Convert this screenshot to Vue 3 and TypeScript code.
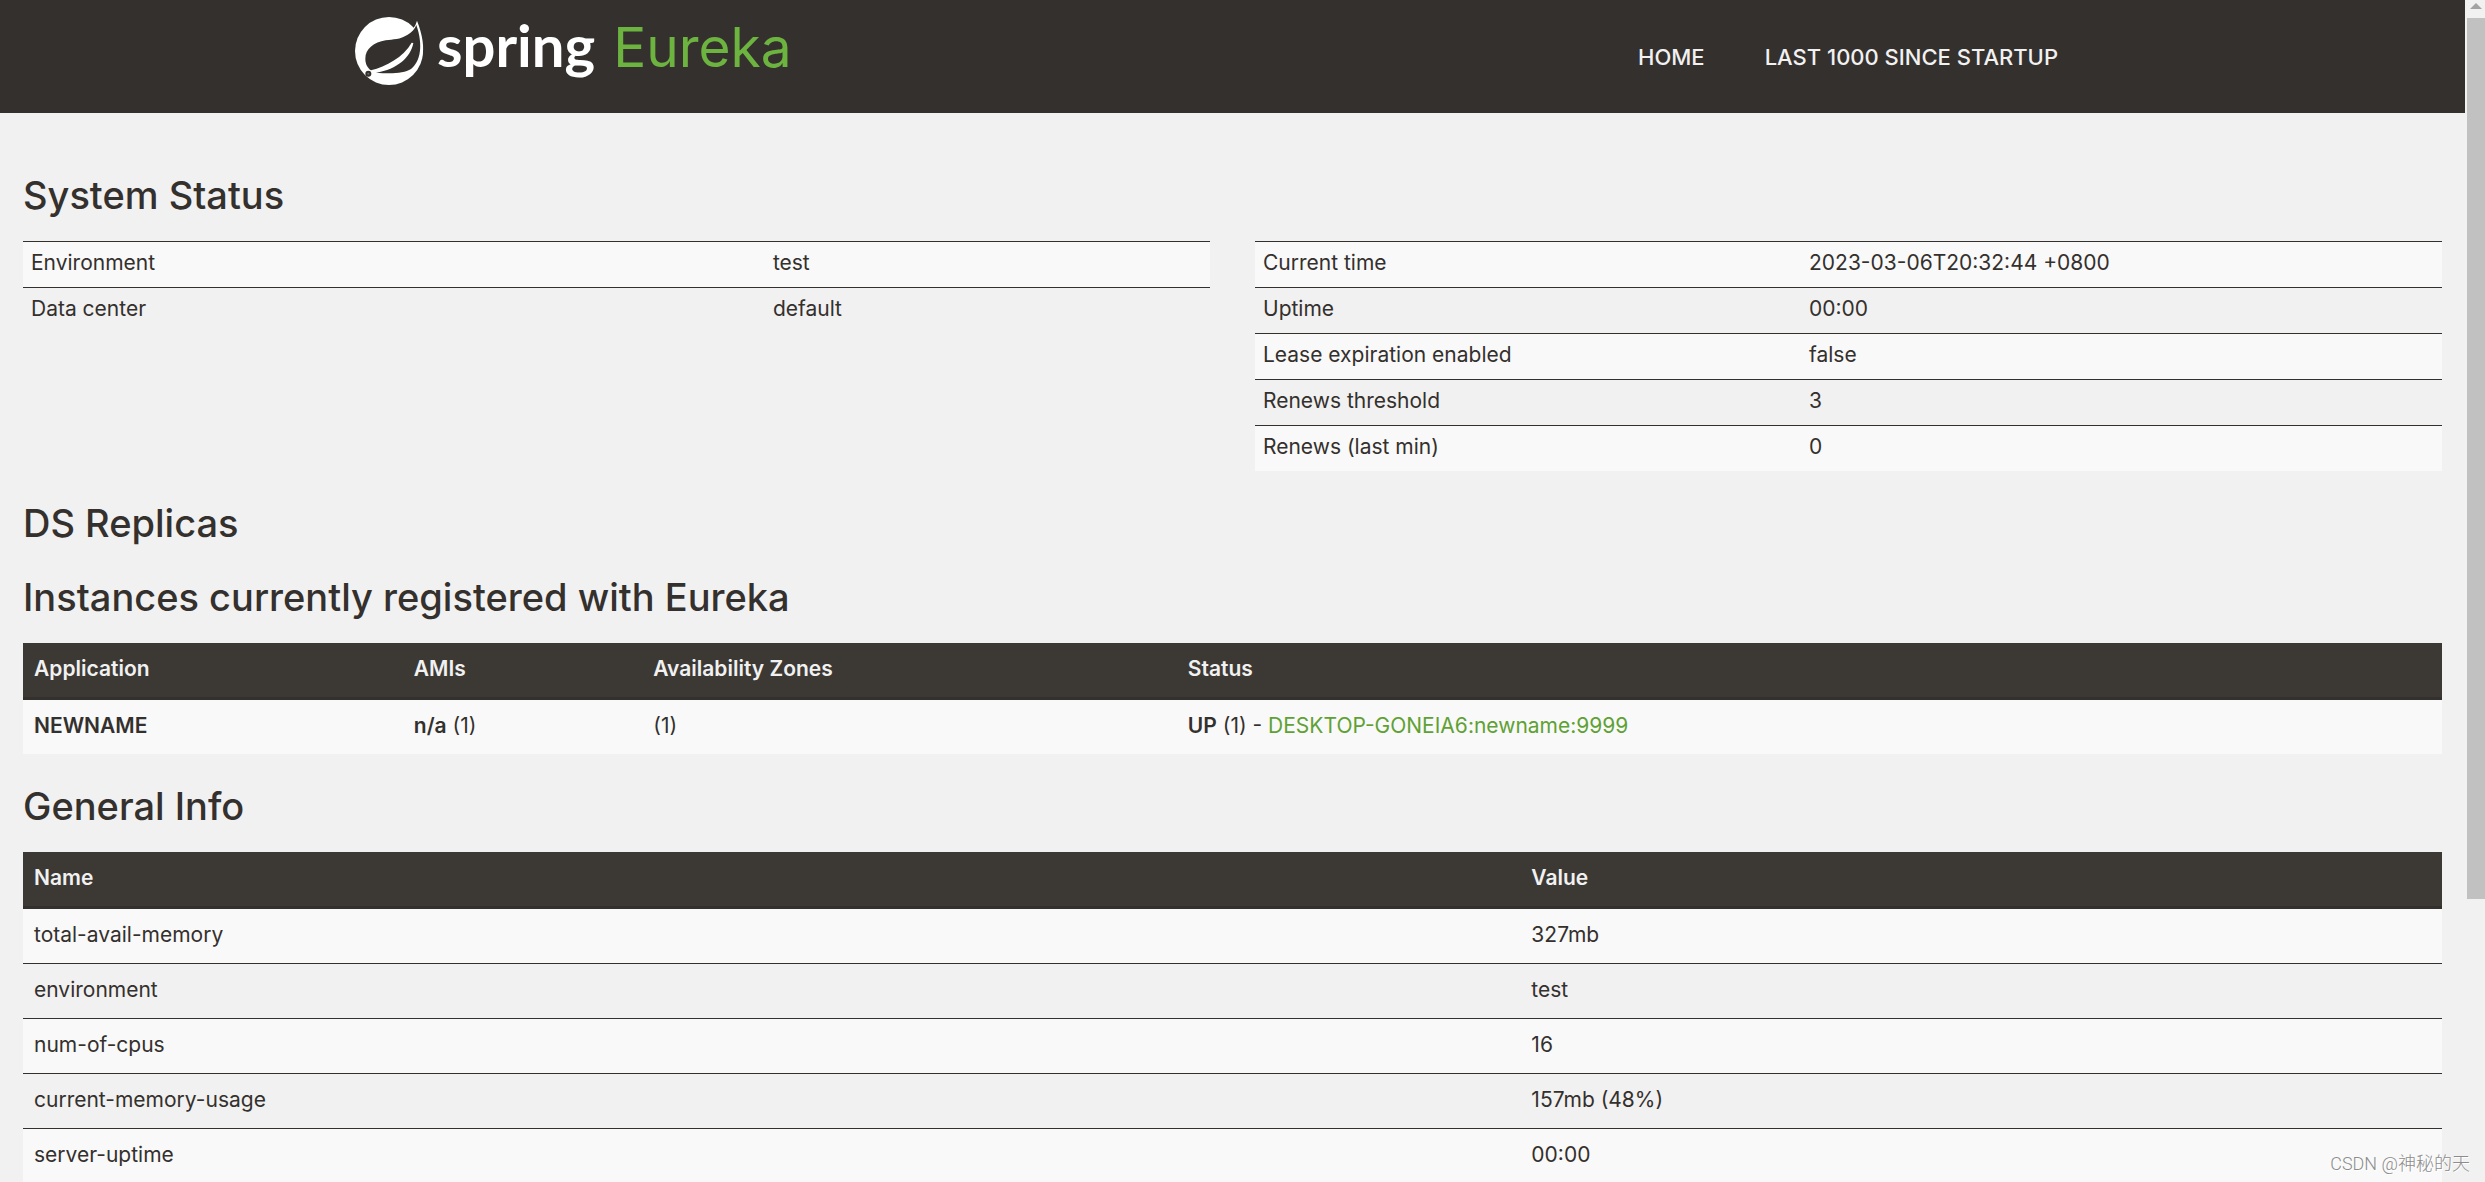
<script setup lang="ts">
interface Pair {
  name: string
  value: string
}

interface Instance {
  application: string
  ami: string
  amiCount: number
  zoneCount: number
  status: string
  statusCount: number
  id: string
}

const environment: Pair[] = [
  { name: 'Environment', value: 'test' },
  { name: 'Data center', value: 'default' },
]

const runtime: Pair[] = [
  { name: 'Current time', value: '2023-03-06T20:32:44 +0800' },
  { name: 'Uptime', value: '00:00' },
  { name: 'Lease expiration enabled', value: 'false' },
  { name: 'Renews threshold', value: '3' },
  { name: 'Renews (last min)', value: '0' },
]

const instances: Instance[] = [
  {
    application: 'NEWNAME',
    ami: 'n/a',
    amiCount: 1,
    zoneCount: 1,
    status: 'UP',
    statusCount: 1,
    id: 'DESKTOP-GONEIA6:newname:9999',
  },
]

const generalInfo: Pair[] = [
  { name: 'total-avail-memory', value: '327mb' },
  { name: 'environment', value: 'test' },
  { name: 'num-of-cpus', value: '16' },
  { name: 'current-memory-usage', value: '157mb (48%)' },
  { name: 'server-uptime', value: '00:00' },
]
</script>

<template>
  <div class="window">
    <div class="page">
      <header class="topbar">
        <div class="container">
          <a class="brand" href="#">
            <svg class="leaf" viewBox="42 48 213 210" aria-hidden="true">
              <circle cx="147" cy="153" r="102" fill="#fff" />
              <path d="M231 62 C248 105 254 145 246 172 L226 180 L205 100 C216 92 226 80 231 62Z" fill="#fff" />
              <path
                d="M229 75 C225 87 215 97 203 104 C180 119 160 117 137 121 C102 127 76 146 76 176 C76 192 83 204 93 211 C138 199 190 172 215 128 L220 129 C212 172 172 208 108 218 C150 222 192 221 213 207 C242 184 250 135 229 75Z"
                fill="#34302d"
              />
              <circle cx="85" cy="221" r="9" fill="#34302d" />
              <circle cx="85" cy="221" r="3" fill="#6b6866" />
            </svg>
            <span class="brand-name">spring</span>
            <span class="brand-product">Eureka</span>
          </a>
          <nav class="menu">
            <a href="#">HOME</a>
            <a href="#lastn">LAST 1000 SINCE STARTUP</a>
          </nav>
        </div>
      </header>

      <main class="content">
        <section>
          <h1>System Status</h1>
          <div class="columns">
            <table class="compact environment">
              <tbody>
                <tr v-for="row in environment" :key="row.name">
                  <td>{{ row.name }}</td>
                  <td>{{ row.value }}</td>
                </tr>
              </tbody>
            </table>
            <table class="compact runtime">
              <tbody>
                <tr v-for="row in runtime" :key="row.name">
                  <td>{{ row.name }}</td>
                  <td>{{ row.value }}</td>
                </tr>
              </tbody>
            </table>
          </div>
        </section>

        <section class="replicas">
          <h1>DS Replicas</h1>
        </section>

        <section>
          <h1>Instances currently registered with Eureka</h1>
          <table class="listing instances">
            <thead>
              <tr>
                <th>Application</th>
                <th>AMIs</th>
                <th>Availability Zones</th>
                <th>Status</th>
              </tr>
            </thead>
            <tbody>
              <tr v-for="item in instances" :key="item.id">
                <td><b>{{ item.application }}</b></td>
                <td><b>{{ item.ami }}</b> ({{ item.amiCount }})</td>
                <td>({{ item.zoneCount }})</td>
                <td>
                  <b>{{ item.status }}</b> ({{ item.statusCount }}) -
                  <a href="#info">{{ item.id }}</a>
                </td>
              </tr>
            </tbody>
          </table>
        </section>

        <section>
          <h1>General Info</h1>
          <table class="listing general">
            <thead>
              <tr>
                <th>Name</th>
                <th>Value</th>
              </tr>
            </thead>
            <tbody>
              <tr v-for="row in generalInfo" :key="row.name">
                <td>{{ row.name }}</td>
                <td>{{ row.value }}</td>
              </tr>
            </tbody>
          </table>
        </section>
      </main>
    </div>

    <div class="scrollbar" aria-hidden="true">
      <svg class="arrow" viewBox="0 0 12 6"><path d="M6 0 L12 6 H0Z" fill="#a3a3a3" /></svg>
      <div class="thumb"></div>
    </div>

    <p class="watermark">CSDN @神秘的天</p>
  </div>
</template>

<style>
body {
  margin: 0;
  background: #f1f1f1;
}
</style>

<style scoped>
.window {
  position: relative;
  display: flex;
  height: 100vh;
  overflow: hidden;
  background: #f1f1f1;
  color: #34302d;
  font-family: Inter, "Noto Sans", sans-serif;
  font-size: 21px;
  line-height: 30px;
}

.page {
  flex: 1;
  min-width: 0;
}

.topbar {
  background: #34302d;
}

.container {
  display: flex;
  justify-content: space-between;
  align-items: center;
  box-sizing: border-box;
  max-width: 1757px;
  height: 113px;
  margin: 0 auto;
  padding-right: 23px;
}

.brand {
  display: flex;
  align-items: baseline;
  align-self: flex-start;
  padding-top: 16px;
  line-height: 58px;
  text-decoration: none;
}

.leaf {
  align-self: flex-start;
  width: 71px;
  height: 70px;
  margin-right: 12px;
}

.brand-name {
  margin-right: 18px;
  color: #fff;
  font-family: Lato, sans-serif;
  font-size: 58px;
  font-weight: 700;
}

.brand-product {
  color: #6db33f;
  font-size: 55px;
}

.menu {
  display: flex;
}

.menu a {
  padding: 0 30px;
  color: #f1f1f1;
  font-size: 22px;
  font-weight: 500;
  text-decoration: none;
}

.content {
  padding: 62px 23px 0;
}

section {
  margin-bottom: 32px;
}

.replicas {
  margin-bottom: 34px;
}

h1 {
  margin: 0;
  font-size: 38px;
  font-weight: 500;
  line-height: 40px;
}

h1 + * {
  margin-top: 26px;
}

.columns {
  display: grid;
  grid-template-columns: 1fr 1fr;
  align-items: start;
  gap: 45px;
}

table {
  width: 100%;
  border-spacing: 0;
  table-layout: fixed;
}

th,
td {
  box-sizing: border-box;
  text-align: left;
}

tbody tr:nth-child(odd) {
  background: #f9f9f9;
}

.compact td {
  padding: 6px 8px 9px;
  border-top: 1px solid #34302d;
}

.listing th,
.listing td {
  padding: 11px 11px 13px;
}

.listing th {
  border-bottom: 3px solid #34302d;
  background: #3c3834;
  color: #f1f1f1;
  font-weight: 600;
}

.listing tr + tr td {
  border-top: 1px solid #34302d;
}

.environment td:first-child {
  width: 62.5%;
}

.runtime td:first-child {
  width: 46%;
}

.instances th:nth-child(1) {
  width: 15.7%;
}

.instances th:nth-child(2) {
  width: 9.9%;
}

.instances th:nth-child(3) {
  width: 22.1%;
}

.general th:first-child {
  width: 61.9%;
}

b {
  font-weight: 600;
}

td a {
  color: #5fa134;
  text-decoration: none;
}

.scrollbar {
  display: flex;
  flex-direction: column;
  box-sizing: border-box;
  width: 20px;
  padding: 3px 0 0 2px;
}

.arrow {
  flex: none;
  align-self: center;
  width: 12px;
  height: 6px;
  margin-bottom: 9px;
}

.thumb {
  height: calc(75% - 3px);
  background: #c1c1c1;
}

.watermark {
  position: absolute;
  right: 15px;
  bottom: 3px;
  margin: 0;
  color: #8c8c8c;
  font-family: Roboto, "Noto Sans CJK SC", sans-serif;
  font-size: 18px;
  font-weight: 300;
  text-shadow: 1px 1px 0 #fff;
}
</style>
